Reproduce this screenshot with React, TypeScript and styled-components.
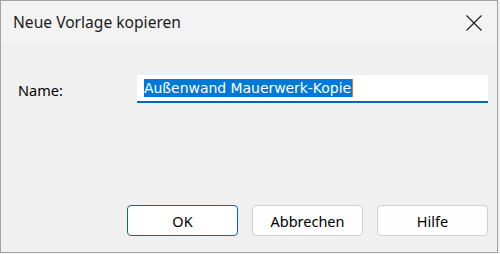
import React from "react";
import styled, { createGlobalStyle } from "styled-components";

const Global = createGlobalStyle`
  html, body { margin: 0; padding: 0; background: #f0f0f0; }
  body { width: 500px; height: 254px; overflow: hidden; }
  * { box-sizing: border-box; }
`;

const Window = styled.div`
  width: 498px;
  height: 253px;
  border: 1px solid #a3a3a3;
  background: #f0f0f0;
  display: flex;
  flex-direction: column;
  font-family: "Noto Sans", "Open Sans", sans-serif;
  color: #1a1a1a;
`;

const TitleBar = styled.div`
  height: 42px;
  background: #f3f3f3;
  display: flex;
  align-items: center;
  justify-content: space-between;
  padding: 0 15px 0 12px;
`;

const Title = styled.div`
  font-size: 15.6px;
  color: #1b1b1b;
  margin-top: -1px;
`;

const CloseButton = styled.button`
  width: 16px;
  height: 16px;
  padding: 0;
  border: none;
  background: transparent;
  display: flex;
  align-items: center;
  justify-content: center;
  margin-top: 1px;
`;

const Body = styled.div`
  flex: 1;
  display: flex;
  flex-direction: column;
  padding: 32px 9px 16px 17px;
`;

const FieldRow = styled.div`
  display: flex;
  align-items: center;
`;

const Label = styled.label`
  width: 119px;
  font-size: 14.5px;
  color: #000;
  padding-top: 2px;
`;

const InputBox = styled.div`
  flex: 1;
  height: 28px;
  background: #fff;
  border-bottom: 2px solid #0067c0;
  display: flex;
  align-items: center;
  padding-left: 7px;
`;

const Selected = styled.span`
  background: #0078d7;
  color: #fff;
  font-family: "DejaVu Sans", sans-serif;
  font-size: 14px;
  line-height: 18px;
  padding: 0 1px 0 0;
  letter-spacing: -0.05px;
`;

const Caret = styled.span`
  display: inline-block;
  width: 1px;
  height: 18px;
  background: #e07a2e;
`;

const Buttons = styled.div`
  margin-top: auto;
  display: flex;
  justify-content: flex-end;
  gap: 14px;
`;

const Button = styled.button<{ $primary?: boolean }>`
  width: 111px;
  height: 31px;
  border-radius: 4px;
  border: 1px solid ${(p) => (p.$primary ? "#0067c0" : "#d0d0d0")};
  background: ${(p) => (p.$primary ? "#ffffff" : "#fdfdfd")};
  font-family: "Noto Sans", "Open Sans", sans-serif;
  font-size: 14.5px;
  color: #000;
  padding: 0;
`;

export default function App() {
  return (
    <>
      <Global />
      <Window>
        <TitleBar>
          <Title>Neue Vorlage kopieren</Title>
          <CloseButton aria-label="Schließen">
            <svg width="16" height="16" viewBox="0 0 16 16">
              <path d="M0.5 0.5 L15.5 15.5 M15.5 0.5 L0.5 15.5" stroke="#1a1a1a" strokeWidth="1.1" fill="none" />
            </svg>
          </CloseButton>
        </TitleBar>
        <Body>
          <FieldRow>
            <Label>Name:</Label>
            <InputBox>
              <Selected>Außenwand Mauerwerk-Kopie</Selected>
              <Caret />
            </InputBox>
          </FieldRow>
          <Buttons>
            <Button $primary>OK</Button>
            <Button>Abbrechen</Button>
            <Button>Hilfe</Button>
          </Buttons>
        </Body>
      </Window>
    </>
  );
}
